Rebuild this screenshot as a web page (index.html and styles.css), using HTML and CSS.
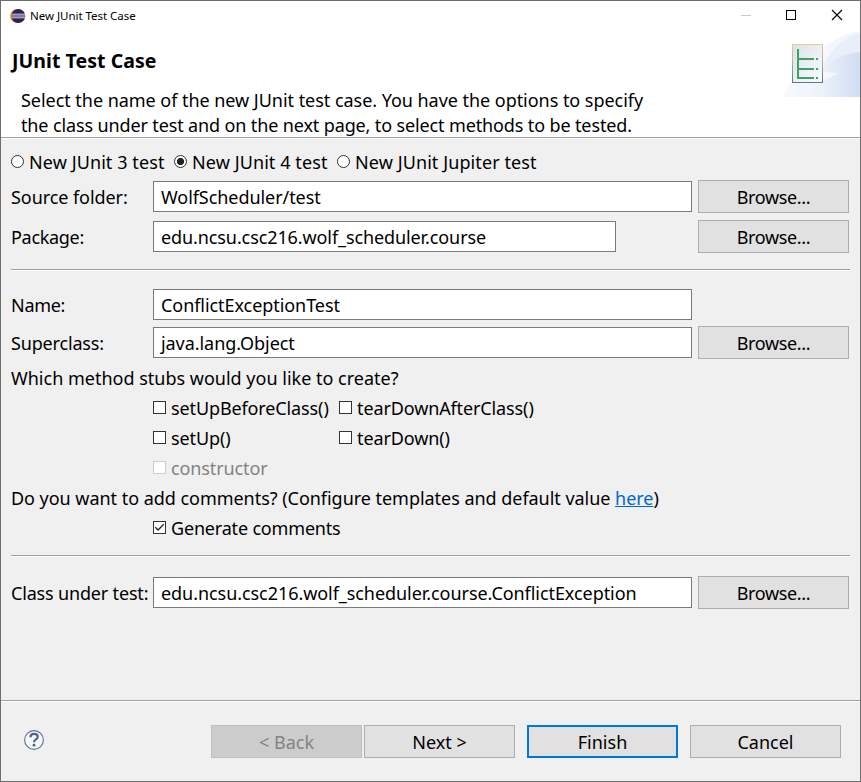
FILE: index.html
```html
<!DOCTYPE html>
<html lang="en">
<head>
<meta charset="utf-8">
<title>New JUnit Test Case</title>
<link rel="stylesheet" href="styles.css">
</head>
<body>
<div class="window">
  <header class="banner">
    <div class="titlebar">
      <svg class="app-icon" width="16" height="16" viewBox="0 0 16 16"><circle cx="7" cy="8" r="6.9" fill="#f7941e"/><circle cx="8.3" cy="8" r="7" fill="#2c2255"/><path d="M1.6 6.2h13.4M1.3 8h14M1.6 9.8h13.4" stroke="#d8d7e6" stroke-width="1"/></svg>
      <span class="caption">New JUnit Test Case</span>
      <svg class="controls" width="110" height="16" viewBox="0 0 110 16"><path d="M0 7.5h10" stroke="#c8c8c8"/><rect x="45.5" y="2.5" width="9" height="9" fill="none" stroke="#000"/><path d="M91 2l10 10M101 2l-10 10" stroke="#000" stroke-width="1.1"/></svg>
    </div>
    <svg class="art" width="76" height="67" viewBox="0 0 76 67">
      <defs>
        <linearGradient id="wave"><stop offset="0" stop-color="#f7f9fe"/><stop offset=".5" stop-color="#edf2fb"/><stop offset="1" stop-color="#cfdcf3"/></linearGradient>
        <linearGradient id="haze"><stop offset="0" stop-color="#f8faff"/><stop offset="1" stop-color="#f1f5fc"/></linearGradient>
        <linearGradient id="frame" x2="0" y2="1"><stop offset="0" stop-color="#edc797"/><stop offset=".45" stop-color="#b9ae9c"/><stop offset="1" stop-color="#557b7c"/></linearGradient>
        <linearGradient id="paper" x2="1" y2="1"><stop offset="0" stop-color="#dbe2ec"/><stop offset="1" stop-color="#fafbfd"/></linearGradient>
      </defs>
      <path d="M0 67Q5 50 20 36Q48 5 76 1v66z" fill="url(#haze)"/>
      <path d="M40 34Q52 10 76 3v22Q58 26 40 35z" fill="#e9effa"/>
      <path d="M0 67Q5 54 12 54Q36 55 54 43Q43 42 34 42Q48 26 76 22v45z" fill="url(#wave)"/>
      <rect x="8.5" y="14.5" width="30" height="38" fill="url(#paper)" stroke="url(#frame)"/>
      <path d="M14 19v30M14 29h16M14 39h16M14 48h16M32 29h2M32 39h2M32 48h2" stroke="#42a064" stroke-width="2" fill="none"/>
    </svg>
    <h1>JUnit Test Case</h1>
    <p><span class="d1">Select the name of the new JUnit test case. You have the options to specify</span><br><span class="d2">the class under test and on the next page, to select methods to be tested.</span></p>
  </header>

  <main>
    <div class="radios">
      <label class="r1"><i class="radio"></i><span>New JUnit 3 test</span></label>
      <label class="r2"><i class="radio on"></i><span>New JUnit 4 test</span></label>
      <label class="r3"><i class="radio"></i><span>New JUnit Jupiter test</span></label>
    </div>
    <div class="row source"><label>Source folder:</label><div class="field">WolfScheduler/test</div><button>Browse...</button></div>
    <div class="row package"><label>Package:</label><div class="field short">edu.ncsu.csc216.wolf_scheduler.course</div><button>Browse...</button></div>
    <hr class="rule first">
    <div class="row name"><label>Name:</label><div class="field">ConflictExceptionTest</div></div>
    <div class="row super"><label>Superclass:</label><div class="field">java.lang.Object</div><button>Browse...</button></div>
    <div class="line stubs"><span>Which method stubs would you like to create?</span></div>
    <div class="checks">
      <label><i class="box"></i><span>setUpBeforeClass()</span></label>
      <label><i class="box"></i><span>tearDownAfterClass()</span></label>
      <label><i class="box"></i><span>setUp()</span></label>
      <label><i class="box"></i><span>tearDown()</span></label>
      <label class="off"><i class="box"></i><span>constructor</span></label>
    </div>
    <div class="line comments"><span>Do you want to add comments? (Configure templates and default value <a>here</a>)</span></div>
    <div class="checks">
      <label class="generate"><i class="box"><svg width="11" height="11" viewBox="0 0 11 11"><path d="M1.3 5.2l2.8 2.8 5.6-5.8" fill="none" stroke="#222" stroke-width="1.3"/></svg></i><span>Generate comments</span></label>
    </div>
    <hr class="rule second">
    <div class="row under"><label>Class under test:</label><div class="field">edu.ncsu.csc216.wolf_scheduler.course.ConflictException</div><button>Browse...</button></div>
  </main>

  <footer>
    <svg class="help" width="22" height="22" viewBox="0 0 22 22"><circle cx="11" cy="11" r="9.4" fill="#f5f6f8" stroke="#60718f" stroke-width="1.1"/><path d="M7.4 8.2Q7.6 4.9 11.1 4.9Q14.7 4.9 14.7 7.8Q14.7 9.5 12.6 10.6Q11.1 11.4 11.1 13.2" fill="none" stroke="#4f6285" stroke-width="2.2"/><circle cx="11" cy="16.2" r="1.4" fill="#4f6285"/></svg>
    <button class="back">&lt; Back</button>
    <button class="next">Next &gt;</button>
    <button class="finish">Finish</button>
    <button class="cancel">Cancel</button>
  </footer>
</div>
</body>
</html>
```
FILE: styles.css
```css
* { box-sizing: border-box; }
body { margin: 0; }
.window {
  width: 861px; height: 782px;
  display: flex; flex-direction: column;
  border: 1px solid #6d6d6d;
  background: #f0f0f0; color: #000;
  font: 18px/24px "Noto Sans", "Open Sans", sans-serif;
  letter-spacing: -0.35px;
  white-space: nowrap;
  overflow: hidden;
}
.banner {
  position: relative;
  height: 138px; flex: none;
  background: #fff;
  border-bottom: 1px solid #fff;
  box-shadow: inset 0 -1px #a0a0a0;
}
.titlebar { display: flex; align-items: center; height: 29px; padding: 0 9px; }
.caption { margin-left: 4px; font-size: 11.5px; letter-spacing: -0.03px; }
.controls { margin-left: auto; }
.art { position: absolute; right: 0; top: 29px; }
h1 { margin: 18px 0 0 11px; font-size: 19.5px; line-height: 26px; letter-spacing: 0.05px; }
p { margin: 14px 0 0 20px; line-height: 25px; letter-spacing: -0.04px; }
.d2 { letter-spacing: -0.13px; }
main { height: 561px; flex: none; padding: 0 11px 0 10px; }
.radios { display: flex; align-items: center; height: 24px; margin-top: 11px; letter-spacing: 0.09px; }
.radios label { display: flex; align-items: center; }
.r1, .r2 { width: 163px; }
.radio { width: 13px; height: 13px; border: 1px solid #333; border-radius: 50%; background: #fff; margin: -2px 5px 0 0; flex: none; }
.radio.on { background: radial-gradient(circle, #222 3.2px, #fff 4px); }
.row { display: flex; align-items: center; height: 33px; }
.row label { width: 142px; flex: none; letter-spacing: -0.17px; }
.source label { letter-spacing: -0.07px; }
.package label, .name label { letter-spacing: -0.3px; }
.field { width: 539px; height: 31px; flex: none; padding: 0 7px; border: 1px solid #7a7a7a; background: #fff; line-height: 31px; letter-spacing: -0.06px; }
.short { width: 463px; letter-spacing: -0.1px; }
button { width: 151px; height: 33px; flex: none; padding: 1px 0 0; border: 1px solid #adadad; background: #e1e1e1; color: #000; font: inherit; letter-spacing: -0.35px; }
.row button { margin-left: auto; }
.source { margin-top: 6px; }
.package { margin-top: 7px; }
.rule { height: 2px; margin: 0 -1px 0 0; border: 0; background: linear-gradient(#a0a0a0 50%, #fff 50%); }
.first { margin-top: 16px; }
.name { margin-top: 17px; }
.super { margin-top: 5px; }
.line { height: 30px; line-height: 30px; letter-spacing: -0.035px; }
.stubs { margin-top: 4px; letter-spacing: 0; }
.checks { display: grid; grid-template-columns: 186px 1fr; grid-auto-rows: 30px; margin-left: 142px; letter-spacing: -0.12px; }
.checks label { display: flex; align-items: center; }
.generate { letter-spacing: -0.18px; }
.box { width: 13px; height: 13px; flex: none; border: 1px solid #333; background: #fff; margin: -2px 5px 0 0; }
.box svg { display: block; }
.off { color: #838383; }
.off .box { border-color: #ccc; }
a { color: #0066cc; text-decoration: underline; text-decoration-thickness: 1px; }
.second { margin-top: 12px; }
.under { margin-top: 19px; }
footer { flex: 1; display: flex; align-items: flex-start; padding: 24px 19px 0 22px; border-top: 1px solid #a0a0a0; box-shadow: inset 0 1px #fff; }
footer button { letter-spacing: 0; }
.help { margin-top: 4px; }
.back { margin-left: 166px; background: #ccc; border-color: #bfbfbf; color: #838383; }
.next { margin-left: 2px; }
.finish { margin-left: 12px; border: 2px solid #0078d7; }
.cancel { margin-left: 12px; }
```
